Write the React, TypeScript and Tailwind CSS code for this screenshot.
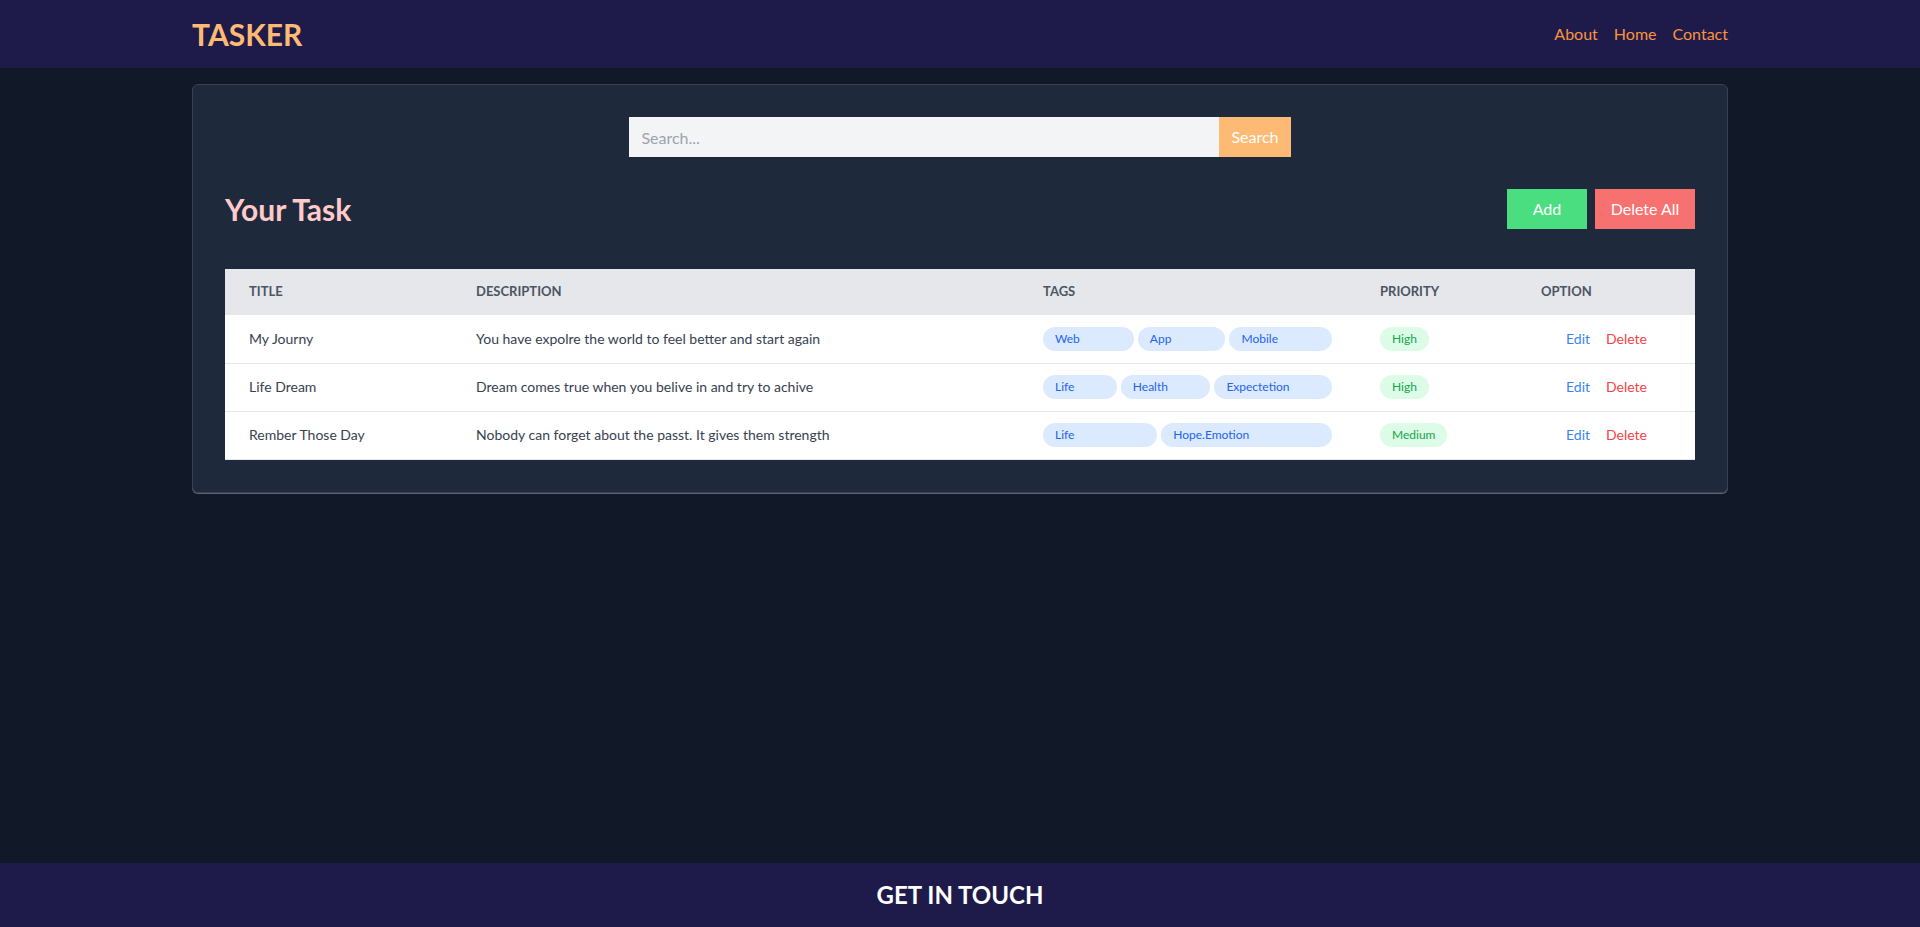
import { useState } from "react";

type Task = {
  id: number;
  title: string;
  description: string;
  tags: string[];
  priority: string;
};

const TASKS: Task[] = [
  {
    id: 1,
    title: "My Journy",
    description: "You have expolre the world to feel better and start again",
    tags: ["Web", "App", "Mobile"],
    priority: "High",
  },
  {
    id: 2,
    title: "Life Dream",
    description: "Dream comes true when you belive in and try to achive",
    tags: ["Life", "Health", "Expectetion"],
    priority: "High",
  },
  {
    id: 3,
    title: "Rember Those Day",
    description: "Nobody can forget about the passt. It gives them strength",
    tags: ["Life", "Hope.Emotion"],
    priority: "Medium",
  },
];

function Header() {
  return (
    <header className="bg-[#1e1b4b]">
      <div className="mx-auto flex max-w-[1536px] items-center justify-between py-4">
        <h1 className="text-3xl font-bold text-[#fdba74]">TASKER</h1>
        <nav className="flex gap-4 text-base text-[#fb923c]">
          <a href="#">About</a>
          <a href="#">Home</a>
          <a href="#">Contact</a>
        </nav>
      </div>
    </header>
  );
}

function SearchBar() {
  const [q, setQ] = useState("");
  return (
    <form
      className="flex justify-center"
      onSubmit={(e) => e.preventDefault()}
    >
      <input
        value={q}
        onChange={(e) => setQ(e.target.value)}
        placeholder="Search..."
        className="h-10 w-[590px] bg-[#f3f4f6] px-3 text-base text-[#374151] outline-none placeholder:text-[#9ca3af]"
      />
      <button type="submit" className="h-10 bg-[#fdba74] px-3 text-base text-white">
        Search
      </button>
    </form>
  );
}

function TaskTable({ tasks }: { tasks: Task[] }) {
  return (
    <div className="mt-10 overflow-hidden bg-white">
      <table className="w-full table-fixed text-left">
        <colgroup>
          <col className="w-[227px]" />
          <col className="w-[567px]" />
          <col className="w-[337px]" />
          <col className="w-[161px]" />
          <col className="w-[179px]" />
        </colgroup>
        <thead className="bg-[#e5e7eb]">
          <tr className="h-[46px] text-[13px] font-bold uppercase text-[#4b5563]">
            <th className="px-6">Title</th>
            <th className="px-6">Description</th>
            <th className="px-6">Tags</th>
            <th className="px-6">Priority</th>
            <th className="px-6">Option</th>
          </tr>
        </thead>
        <tbody>
          {tasks.map((t) => (
            <tr
              key={t.id}
              className="h-12 border-b border-[#e5e7eb] text-sm text-[#374151]"
            >
              <td className="px-6">{t.title}</td>
              <td className="px-6">{t.description}</td>
              <td className="px-6">
                <div className="flex gap-1">
                  {t.tags.map((tag) => (
                    <span
                      key={tag}
                      className="grow rounded-full bg-[#dbeafe] px-3 py-1 text-xs text-[#2563eb]"
                    >
                      {tag}
                    </span>
                  ))}
                </div>
              </td>
              <td className="px-6">
                <span className="inline-block rounded-full bg-[#dcfce7] px-3 py-1 text-xs text-[#16a34a]">
                  {t.priority}
                </span>
              </td>
              <td className="px-6 text-center">
                <button type="button" className="text-[#3b82f6]">
                  Edit
                </button>
                <button type="button" className="ml-4 text-[#ef4444]">
                  Delete
                </button>
              </td>
            </tr>
          ))}
        </tbody>
      </table>
    </div>
  );
}

export default function App() {
  return (
    <div className="flex min-h-screen flex-col bg-[#111827] font-['Segoe_UI',Lato,sans-serif]">
      <Header />
      <main className="flex-1">
        <section className="mx-auto mt-4 max-w-[1536px] rounded-md border border-[#374151] bg-[#1e293b] p-8 shadow-[0_1px_0_#5b6579]">
          <SearchBar />
          <div className="mt-8 flex items-center justify-between">
            <h2 className="text-3xl font-bold text-[#fecaca]">Your Task</h2>
            <div className="flex gap-2">
              <button type="button" className="h-10 w-20 bg-[#4ade80] text-base text-white">
                Add
              </button>
              <button type="button" className="h-10 w-[100px] bg-[#f87171] text-base text-white">
                Delete All
              </button>
            </div>
          </div>
          <TaskTable tasks={TASKS} />
        </section>
      </main>
      <footer className="bg-[#1e1b4b] py-4 text-center text-2xl font-bold text-white">
        GET IN TOUCH
      </footer>
    </div>
  );
}
